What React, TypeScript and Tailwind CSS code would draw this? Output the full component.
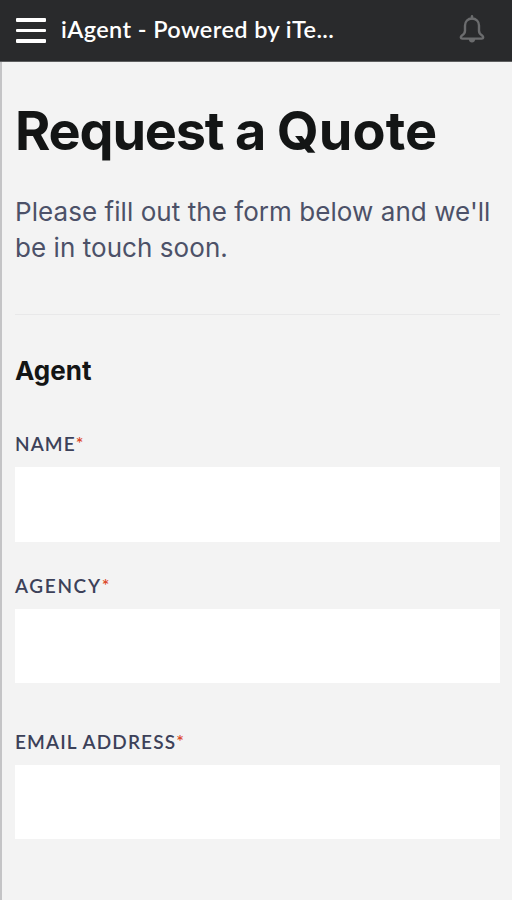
import { useState } from 'react';

const fields = [
  { id: 'name', label: 'Name', className: 'mt-[46px]', tracking: 'tracking-[1.1px]', height: 'h-[75px]' },
  { id: 'agency', label: 'Agency', className: 'mt-[33px]', tracking: 'tracking-[1.65px]', height: 'h-[74px]' },
  { id: 'email', label: 'Email Address', className: 'mt-[48px]', tracking: 'tracking-[1.15px]', height: 'h-[74px]' },
];

const BellIcon = () => (
  <svg
    className="h-[28px] w-[26px]"
    viewBox="0 0 26 28"
    fill="none"
    stroke="currentColor"
    strokeWidth="2.4"
    strokeLinecap="round"
    strokeLinejoin="round"
  >
    <path d="M13 1.2v2.3" />
    <path d="M13 3.5c-4.1 0-7 3-7 7v5.300c0 2.500-.9 3.400-3.100 4.800-1.600 1.100-1.400 3 .4 3h19.400c1.800 0 2-1.900.4-3-2.200-1.400-3.100-2.300-3.100-4.800v-5.300c0-4-2.900-7-7-7z" />
    <path d="M11 24.400c.2 1.300 1 2 2 2s1.800-.7 2-2z" />
  </svg>
);

const Header = () => (
  <header className="flex h-[62px] items-center border-b border-[#5d5e5f] bg-[#292a2c] pr-[27px] pl-4">
    <button type="button" aria-label="Menu" className="flex w-[30px] flex-col gap-[7px]">
      <span className="h-[3.5px] w-full rounded-[1px] bg-white" />
      <span className="h-[3.5px] w-full rounded-[1px] bg-white" />
      <span className="h-[3.5px] w-full rounded-[1px] bg-white" />
    </button>
    <span className="mb-[4px] ml-[15px] font-['Lato',sans-serif] text-[23.5px] leading-[30px] font-semibold tracking-[0.4px] text-white">
      iAgent - Powered by iTe...
    </span>
    <button type="button" aria-label="Notifications" className="mb-[4px] ml-auto text-[#6b6c6e]">
      <BellIcon />
    </button>
  </header>
);

export default function App() {
  const [values, setValues] = useState<Record<string, string>>({});

  return (
    <div className="flex h-screen flex-col overflow-hidden bg-[#f3f3f3] font-['Inter',sans-serif]">
      <Header />
      <main className="flex-1 border-l-2 border-[#c4c4c6] pr-3 pl-[13px]">
        <h1 className="mt-[37px] text-[54px] leading-[64px] font-bold tracking-[-1.2px] whitespace-nowrap text-[#131515]">
          Request a <span className="tracking-[0.1px]">Quote</span>
        </h1>
        <p className="mt-[31px] text-[26px] leading-[36px] tracking-[0.06px] whitespace-nowrap text-[#4c5168]">
          Please fill out the form below and we'll
          <br />
          be in touch soon.
        </p>
        <hr className="mt-[48px] border-[#e8e8e9]" />
        <form>
          <h2 className="mt-[40px] text-[26px] leading-[32px] font-bold text-[#131515]">Agent</h2>
          {fields.map((field) => (
            <div key={field.id} className={field.className}>
              <label
                htmlFor={field.id}
                className={`flex h-[22px] items-center font-['Lato',sans-serif] text-[19px] leading-[22px] font-semibold text-[#3c4159] uppercase ${field.tracking}`}
              >
                {field.label}
                <span className="-mt-0.5 text-[18px] tracking-normal text-[#dc4a2c]">*</span>
              </label>
              <input
                id={field.id}
                value={values[field.id] ?? ''}
                onChange={(e) => setValues({ ...values, [field.id]: e.target.value })}
                className={`mt-3 block w-full bg-white px-4 outline-none ${field.height}`}
              />
            </div>
          ))}
        </form>
      </main>
    </div>
  );
}
